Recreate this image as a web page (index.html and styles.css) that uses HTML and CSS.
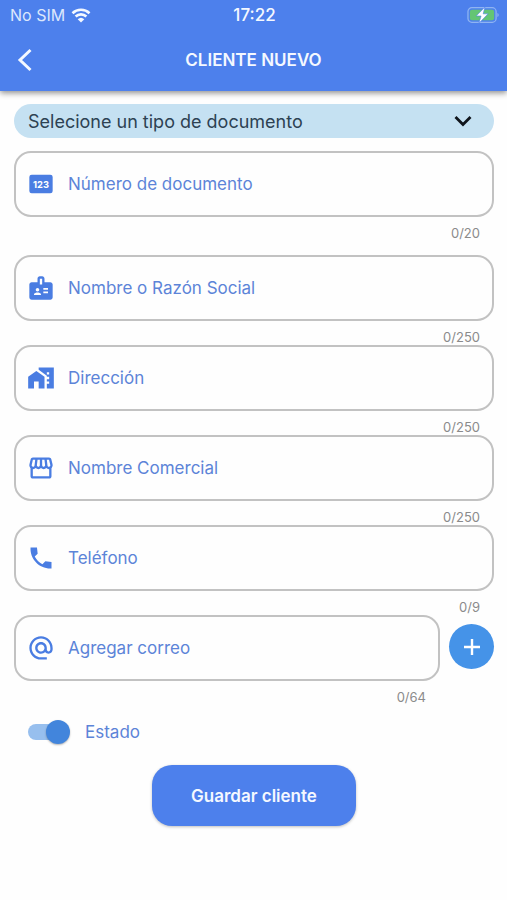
FILE: index.html
```html
<!DOCTYPE html>
<html lang="es">
<head>
  <meta charset="UTF-8">
  <meta name="viewport" content="width=device-width, initial-scale=1.0">
  <title>Cliente nuevo</title>
  <link rel="stylesheet" href="styles.css">
</head>
<body>
<header class="app-header">
  <div class="status-bar">
    <div class="carrier">
      <span>No SIM</span>
      <svg class="wifi" viewBox="0 0 20 15" aria-hidden="true">
        <path d="M1.5 5.2a12.3 12.3 0 0 1 17 0M4.6 8.5a7.8 7.8 0 0 1 10.8 0" fill="none" stroke="currentColor" stroke-width="2.6"/>
        <path d="M10 14.6l-3.3-3.3a4.8 4.8 0 0 1 6.6 0z" fill="currentColor"/>
      </svg>
    </div>
    <span class="clock">17:22</span>
    <svg class="battery" viewBox="0 0 33 18" aria-hidden="true">
      <rect x="1" y="1.5" width="29" height="15" rx="4" fill="none" stroke="#8fb4f2" stroke-width="1.3"/>
      <path d="M31.3 7q1.4.6 1.4 2t-1.4 2z" fill="#8fb4f2"/>
      <rect x="3" y="3.5" width="25" height="11" rx="2.2" fill="#64c574"/>
      <path d="M18.5 .8L9.5 10h5l-2.2 7.4L21.8 7.8h-5.1z" fill="#fff" stroke="#4d80ec" stroke-width=".6"/>
    </svg>
  </div>
  <div class="nav-bar">
    <button class="back" type="button" aria-label="Volver">
      <svg viewBox="0 0 16 24" aria-hidden="true"><path d="M13.5 2L3 12l10.5 10" fill="none" stroke="currentColor" stroke-width="3"/></svg>
    </button>
    <h1>CLIENTE NUEVO</h1>
  </div>
</header>

<form class="client-form">
  <div class="doc-type">
    <select id="docType" aria-label="Tipo de documento">
      <option>Selecione un tipo de documento</option>
      <option>DNI</option>
      <option>RUC</option>
    </select>
    <svg class="chevron" viewBox="0 0 18 12" aria-hidden="true"><path d="M1.5 2L9 9.5 16.5 2" fill="none" stroke="currentColor" stroke-width="2.8"/></svg>
  </div>

  <div class="field field-number">
    <div class="box">
      <svg class="icon" viewBox="0 0 24 24" aria-hidden="true">
        <rect x="2" y="4" width="20" height="16" rx="2"/>
        <text class="pin-digits" x="12" y="15" text-anchor="middle">123</text>
      </svg>
      <input type="text" id="number" maxlength="20" placeholder="Número de documento" aria-label="Número de documento">
    </div>
    <span class="counter">0/20</span>
  </div>

  <div class="field">
    <div class="box">
      <svg class="icon" viewBox="0 0 24 24" aria-hidden="true"><path d="M20 7h-5V4c0-1.1-.9-2-2-2h-2c-1.1 0-2 .9-2 2v3H4c-1.1 0-2 .9-2 2v11c0 1.1.9 2 2 2h16c1.1 0 2-.9 2-2V9c0-1.1-.9-2-2-2zM9 12c.83 0 1.5.67 1.5 1.5S9.83 15 9 15s-1.5-.67-1.5-1.5S8.17 12 9 12zm3 6H6v-.75c0-1 2-1.5 3-1.5s3 .5 3 1.5V18zm1-9h-2V4h2v5zm5 7.5h-4V15h4v1.5zm0-3h-4V12h4v1.5z"/></svg>
      <input type="text" id="name" maxlength="250" placeholder="Nombre o Razón Social" aria-label="Nombre o Razón Social">
    </div>
    <span class="counter">0/250</span>
  </div>

  <div class="field">
    <div class="box">
      <svg class="icon" viewBox="0 0 24 24" aria-hidden="true"><path d="M1 11v10h5v-6h4v6h5V11L8 6zM10 3v1.97l7 5V11h2v2h-2v2h2v2h-2v4h6V3H10zm9 6h-2V7h2v2z"/></svg>
      <input type="text" id="address" maxlength="250" placeholder="Dirección" aria-label="Dirección">
    </div>
    <span class="counter">0/250</span>
  </div>

  <div class="field">
    <div class="box">
      <svg class="icon" viewBox="0 0 24 24" aria-hidden="true"><path d="M21.9 8.89l-1.05-4.37c-.22-.9-1-1.52-1.91-1.52H5.05c-.9 0-1.69.63-1.9 1.52L2.1 8.89c-.24 1.02-.02 2.06.62 2.88.08.11.19.19.28.29V19c0 1.1.9 2 2 2h14c1.1 0 2-.9 2-2v-6.94c.09-.09.2-.18.28-.28.64-.82.87-1.87.62-2.89zm-2.99-3.9l1.05 4.37c.1.42.01.84-.25 1.17-.14.18-.44.47-.94.47-.61 0-1.14-.49-1.21-1.14L16.98 5l1.93-.01zM13 5h1.96l.54 4.52c.05.39-.07.78-.33 1.07-.22.26-.54.41-.95.41-.67 0-1.22-.59-1.22-1.31V5zM8.49 9.52L9.04 5H11v4.69c0 .72-.55 1.31-1.29 1.31-.34 0-.65-.15-.89-.41-.25-.29-.37-.68-.33-1.07zm-4.45-.16L5.05 5h1.97l-.58 4.86c-.08.65-.6 1.14-1.21 1.14-.49 0-.8-.29-.93-.47-.27-.32-.36-.75-.26-1.17zM5 19v-6.03c.08.01.15.03.23.03.87 0 1.66-.36 2.24-.95.6.6 1.4.95 2.31.95.87 0 1.65-.36 2.23-.93.59.57 1.39.93 2.29.93.84 0 1.64-.35 2.24-.95.58.59 1.37.95 2.24.95.08 0 .15-.02.23-.03V19H5z"/></svg>
      <input type="text" id="tradeName" maxlength="250" placeholder="Nombre Comercial" aria-label="Nombre Comercial">
    </div>
    <span class="counter">0/250</span>
  </div>

  <div class="field">
    <div class="box">
      <svg class="icon" viewBox="0 0 24 24" aria-hidden="true"><path d="M21 15.46l-5.27-.61-2.52 2.52c-2.83-1.44-5.15-3.75-6.59-6.59l2.53-2.53L8.54 3H3.03C2.45 13.18 10.82 21.55 21 20.97v-5.51z"/></svg>
      <input type="tel" id="phone" maxlength="9" placeholder="Teléfono" aria-label="Teléfono">
    </div>
    <span class="counter">0/9</span>
  </div>

  <div class="email-row">
    <div class="field">
      <div class="box">
        <svg class="icon" viewBox="0 0 24 24" aria-hidden="true"><path d="M12 1.95c-5.52 0-10 4.48-10 10s4.48 10 10 10h5v-2h-5c-4.34 0-8-3.66-8-8s3.66-8 8-8 8 3.66 8 8v1.43c0 .79-.71 1.57-1.5 1.57s-1.5-.78-1.5-1.57v-1.43c0-2.76-2.24-5-5-5s-5 2.24-5 5 2.24 5 5 5c1.38 0 2.64-.56 3.54-1.47.65.89 1.77 1.47 2.96 1.47 1.97 0 3.5-1.6 3.5-3.57v-1.43c0-5.52-4.48-10-10-10zm0 13c-1.66 0-3-1.34-3-3s1.34-3 3-3 3 1.34 3 3-1.34 3-3 3z"/></svg>
        <input type="email" id="email" maxlength="64" placeholder="Agregar correo" aria-label="Agregar correo">
      </div>
      <span class="counter">0/64</span>
    </div>
    <button class="add" type="button" aria-label="Agregar">
      <svg viewBox="0 0 18 18" aria-hidden="true"><path d="M9 1v16M1 9h16" stroke="currentColor" stroke-width="2.4"/></svg>
    </button>
  </div>

  <div class="status-row">
    <input class="switch" type="checkbox" id="status" checked>
    <label for="status">Estado</label>
  </div>

  <button class="save" type="submit">Guardar cliente</button>
</form>
</body>
</html>
```
FILE: styles.css
```css
* {
  margin: 0;
  padding: 0;
  box-sizing: border-box;
}

body {
  min-height: 100vh;
  background: #fefefe;
  font-family: Inter, "Liberation Sans", sans-serif;
  font-size: 17px;
  color: #5c84d8;
}

button, input, select {
  font: inherit;
  border: none;
}

button {
  cursor: pointer;
}

.app-header {
  background: #4d80ec;
  color: #f4f8ff;
  box-shadow: 0 2px 6px rgba(0, 0, 0, 0.45);
}

.status-bar {
  display: grid;
  grid-template-columns: 1fr auto 1fr;
  align-items: center;
  height: 28px;
  padding: 2px 8px 0 10px;
}

.carrier {
  display: flex;
  align-items: center;
  gap: 6px;
  color: #dce7fc;
  font-size: 16px;
}

.wifi {
  width: 20px;
  height: 15px;
  color: #f4f8ff;
}

.clock {
  font-weight: 500;
}

.battery {
  width: 32px;
  height: 18px;
  justify-self: end;
}

.nav-bar {
  display: grid;
  grid-template-columns: 1fr auto 1fr;
  align-items: center;
  height: 63px;
  padding: 0 17px;
}

.nav-bar h1 {
  font-size: 17px;
  font-weight: 600;
}

.back {
  width: 16px;
  height: 24px;
  background: none;
  color: inherit;
}

.back svg {
  display: block;
}

.client-form {
  display: flex;
  flex-direction: column;
  padding: 13px 13px 24px 14px;
}

.doc-type {
  display: grid;
  align-items: center;
  height: 34px;
  margin-bottom: 13px;
  border-radius: 17px;
  background: #c5e1f2;
}

.doc-type select {
  grid-area: 1 / 1;
  width: 100%;
  height: 34px;
  padding: 0 52px 0 14px;
  border-radius: 17px;
  background: transparent;
  color: #2d4252;
  font-size: 18px;
  appearance: none;
}

.chevron {
  grid-area: 1 / 1;
  justify-self: end;
  width: 18px;
  height: 12px;
  margin-right: 22px;
  color: #10151c;
  pointer-events: none;
}

.field {
  display: flex;
  flex-direction: column;
}

.field-number {
  margin-bottom: 14px;
}

.box {
  display: flex;
  align-items: center;
  gap: 13px;
  height: 66px;
  padding: 0 11px;
  border: 2px solid #c2c2c2;
  border-radius: 17px;
}

.box input {
  flex: 1;
  min-width: 0;
  height: 100%;
  background: none;
  color: #4f7fdc;
  outline: none;
}

.box input::placeholder {
  color: #5c84d8;
  opacity: 1;
}

.box:focus-within {
  border-color: #4d80ec;
}

.icon {
  flex: none;
  width: 28px;
  height: 28px;
  fill: #4a7de2;
}

.pin-digits {
  fill: #fff;
  font-size: 8px;
  font-weight: 700;
}

.counter {
  align-self: flex-end;
  padding: 8px 14px 0 0;
  color: #8b8b8b;
  font-size: 13px;
  line-height: 16px;
}

.email-row {
  display: flex;
  gap: 9px;
}

.email-row .field {
  flex: 1;
}

.add {
  display: grid;
  place-items: center;
  width: 45px;
  height: 45px;
  margin-top: 9px;
  border-radius: 50%;
  background: #4593e8;
  color: #fff;
}

.add svg {
  width: 18px;
  height: 18px;
}

.status-row {
  display: flex;
  align-items: center;
  gap: 15px;
  height: 24px;
  margin: 15px 0 21px 14px;
}

.switch {
  display: grid;
  align-items: center;
  width: 42px;
  height: 24px;
  appearance: none;
  cursor: pointer;
}

.switch::before, .switch::after {
  content: "";
  grid-area: 1 / 1;
}

.switch::before {
  width: 36px;
  height: 16px;
  border-radius: 8px;
  background: #bdbdbd;
}

.switch::after {
  width: 24px;
  height: 24px;
  border-radius: 50%;
  background: #f5f5f5;
  box-shadow: 0 1px 2px rgba(0, 0, 0, 0.3);
}

.switch:checked::before {
  background: #97bfee;
}

.switch:checked::after {
  justify-self: end;
  background: #4285dc;
}

.save {
  align-self: center;
  height: 61px;
  padding: 0 39px;
  border-radius: 20px;
  background: #4d80ec;
  color: #f4f8ff;
  font-weight: 600;
  box-shadow: 0 1px 3px rgba(0, 0, 0, 0.25);
}
```
